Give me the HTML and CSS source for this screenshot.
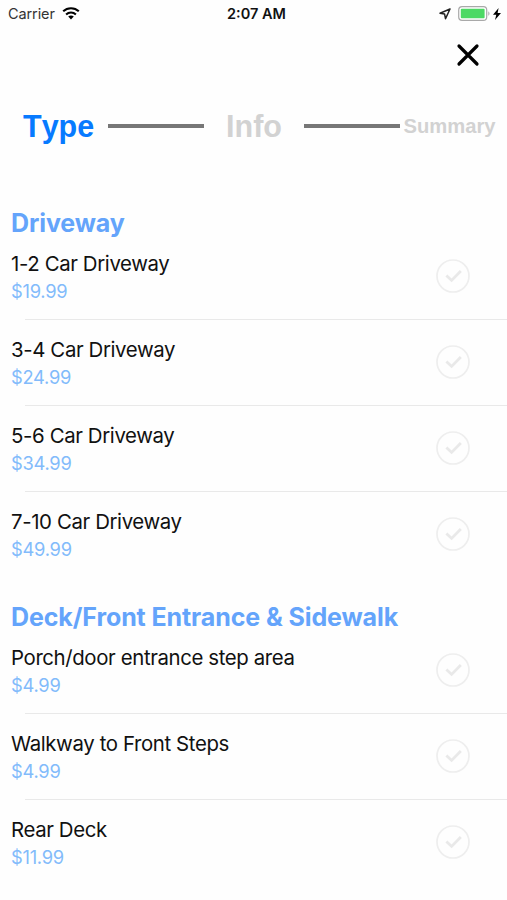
FILE: index.html
```html
<!DOCTYPE html>
<html lang="en">
  <head>
    <meta charset="utf-8" />
    <title>Select Type</title>
    <link rel="stylesheet" href="styles.css">
  </head>
  <body>
    <svg width="0" height="0" class="defs">
      <symbol id="check" viewBox="0 0 34 34">
        <circle cx="17" cy="17" r="16" fill="none" stroke="#eeeeee" stroke-width="1.7" />
        <path d="M10.4 16.4l5.2 5 9.2-9.3" fill="none" stroke="#e9e9e9" stroke-width="2.8" />
      </symbol>
    </svg>

    <div class="status-bar">
      <div class="status-left">
        <span class="carrier">Carrier</span>
        <svg width="18" height="13" viewBox="0 0 18 13" fill="none" stroke="#000" stroke-width="2.1">
          <path d="M1.2 4.3C5.5.2 12.5.2 16.8 4.3" />
          <path d="M4.1 7.4c2.8-2.6 7-2.6 9.8 0" />
          <path d="M6.2 9.5c1.6-1.4 4-1.4 5.6 0L9 12.4z" fill="#000" stroke="none" />
        </svg>
      </div>
      <span class="time">2:07 AM</span>
      <div class="status-right">
        <svg width="12" height="12" viewBox="0 0 12 12" fill="none" stroke="#222" stroke-width="1.5" stroke-linejoin="round">
          <path d="M11 1L1 5.2l4.6.9.9 4.6z" />
        </svg>
        <svg class="battery" width="32" height="15" viewBox="0 0 32 15">
          <rect x=".7" y=".7" width="28" height="13.6" rx="3.4" fill="#fff" stroke="#a9a9a9" stroke-width="1.2" />
          <rect x="2.8" y="2.8" width="23.8" height="9.4" rx="1" fill="#4cd964" />
          <path d="M30.3 5.2c1.6.8 1.6 3.8 0 4.6z" fill="#a9a9a9" />
        </svg>
        <svg width="8" height="12" viewBox="0 0 8 12">
          <path d="M5.6 0L0 6.8h3.3L2 12l6-7H4.6z" fill="#000" />
        </svg>
      </div>
    </div>

    <div class="close-row">
      <button class="close" aria-label="Close">
        <svg width="24" height="24" viewBox="0 0 24 24" stroke="#000" stroke-width="3.2" stroke-linecap="round">
          <path d="M3 3l18 18M21 3L3 21" />
        </svg>
      </button>
    </div>

    <div class="steps">
      <span class="step active">Type</span>
      <span class="line"></span>
      <span class="step">Info</span>
      <span class="line"></span>
      <span class="step small">Summary</span>
    </div>

    <div class="section">
      <h2>Driveway</h2>
      <ul>
        <li>
          <div>
            <p class="name">1-2 Car Driveway</p>
            <p class="price">$19.99</p>
          </div>
          <svg class="check"><use href="#check" /></svg>
        </li>
        <li>
          <div>
            <p class="name">3-4 Car Driveway</p>
            <p class="price">$24.99</p>
          </div>
          <svg class="check"><use href="#check" /></svg>
        </li>
        <li>
          <div>
            <p class="name">5-6 Car Driveway</p>
            <p class="price">$34.99</p>
          </div>
          <svg class="check"><use href="#check" /></svg>
        </li>
        <li>
          <div>
            <p class="name">7-10 Car Driveway</p>
            <p class="price">$49.99</p>
          </div>
          <svg class="check"><use href="#check" /></svg>
        </li>
      </ul>
    </div>

    <div class="section">
      <h2>Deck/Front Entrance &amp; Sidewalk</h2>
      <ul>
        <li>
          <div>
            <p class="name">Porch/door entrance step area</p>
            <p class="price">$4.99</p>
          </div>
          <svg class="check"><use href="#check" /></svg>
        </li>
        <li>
          <div>
            <p class="name">Walkway to Front Steps</p>
            <p class="price">$4.99</p>
          </div>
          <svg class="check"><use href="#check" /></svg>
        </li>
        <li>
          <div>
            <p class="name">Rear Deck</p>
            <p class="price">$11.99</p>
          </div>
          <svg class="check"><use href="#check" /></svg>
        </li>
      </ul>
    </div>
  </body>
</html>
```
FILE: styles.css
```css
* {
  box-sizing: border-box;
}

body {
  margin: 0;
  background: #fefefe;
  color: #111;
  font-family: Inter, "Liberation Sans", sans-serif;
}

h2,
p,
ul {
  margin: 0;
  padding: 0;
}

.defs {
  display: none;
}

/* Status bar */
.status-bar {
  display: grid;
  grid-template-columns: 1fr auto 1fr;
  align-items: center;
  height: 27px;
  padding: 0 6px 0 8px;
  font-size: 14.5px;
}

.status-left,
.status-right {
  display: flex;
  align-items: center;
}

.status-left {
  gap: 7px;
}

.status-right {
  justify-content: flex-end;
  gap: 3px;
}

.battery {
  margin-left: 4px;
}

.carrier {
  color: #333;
  letter-spacing: -0.1px;
}

.time {
  padding-left: 4px;
  font-weight: 600;
}

.close-row {
  display: flex;
  justify-content: flex-end;
  height: 57px;
  padding: 16px 27px 0 0;
}

.close {
  width: 24px;
  height: 24px;
  padding: 0;
  border: none;
  background: none;
}

/* Step progress */
.steps {
  display: flex;
  align-items: center;
  height: 84px;
  padding-left: 23px;
  font-family: "Liberation Sans", Arial, sans-serif;
  font-weight: bold;
  font-size: 30.5px;
  font-kerning: none;
  color: #d2d2d2;
}

.step {
  width: 100px;
  text-align: center;
}

.step.active {
  width: 85px;
  text-align: left;
  color: #077aff;
}

.step.small {
  width: 99px;
  font-size: 20.2px;
}

.line {
  width: 96px;
  height: 4px;
  background: #777;
}

/* Price lists */
.section {
  padding-top: 16.6px;
}

.section + .section {
  padding-top: 0;
}

h2 {
  height: 49px;
  padding: 24px 0 0 11px;
  font-size: 25px;
  line-height: 28px;
  letter-spacing: -0.1px;
  color: #64a4fb;
}

ul {
  list-style: none;
}

li {
  display: flex;
  justify-content: space-between;
  align-items: flex-start;
  height: 86.3px;
  padding: 16px 37px 0 11px;
  background: linear-gradient(#e9e9e9, #e9e9e9) 25px 100% / 100% 1.4px no-repeat;
}

li:last-child {
  background: none;
}

.name {
  font-size: 20.4px;
  line-height: 28px;
  letter-spacing: -0.38px;
}

.price {
  font-size: 18.3px;
  line-height: 27px;
  letter-spacing: -0.25px;
  color: #82bbfb;
}

.check {
  width: 34px;
  height: 34px;
  margin-top: 9px;
}
```
